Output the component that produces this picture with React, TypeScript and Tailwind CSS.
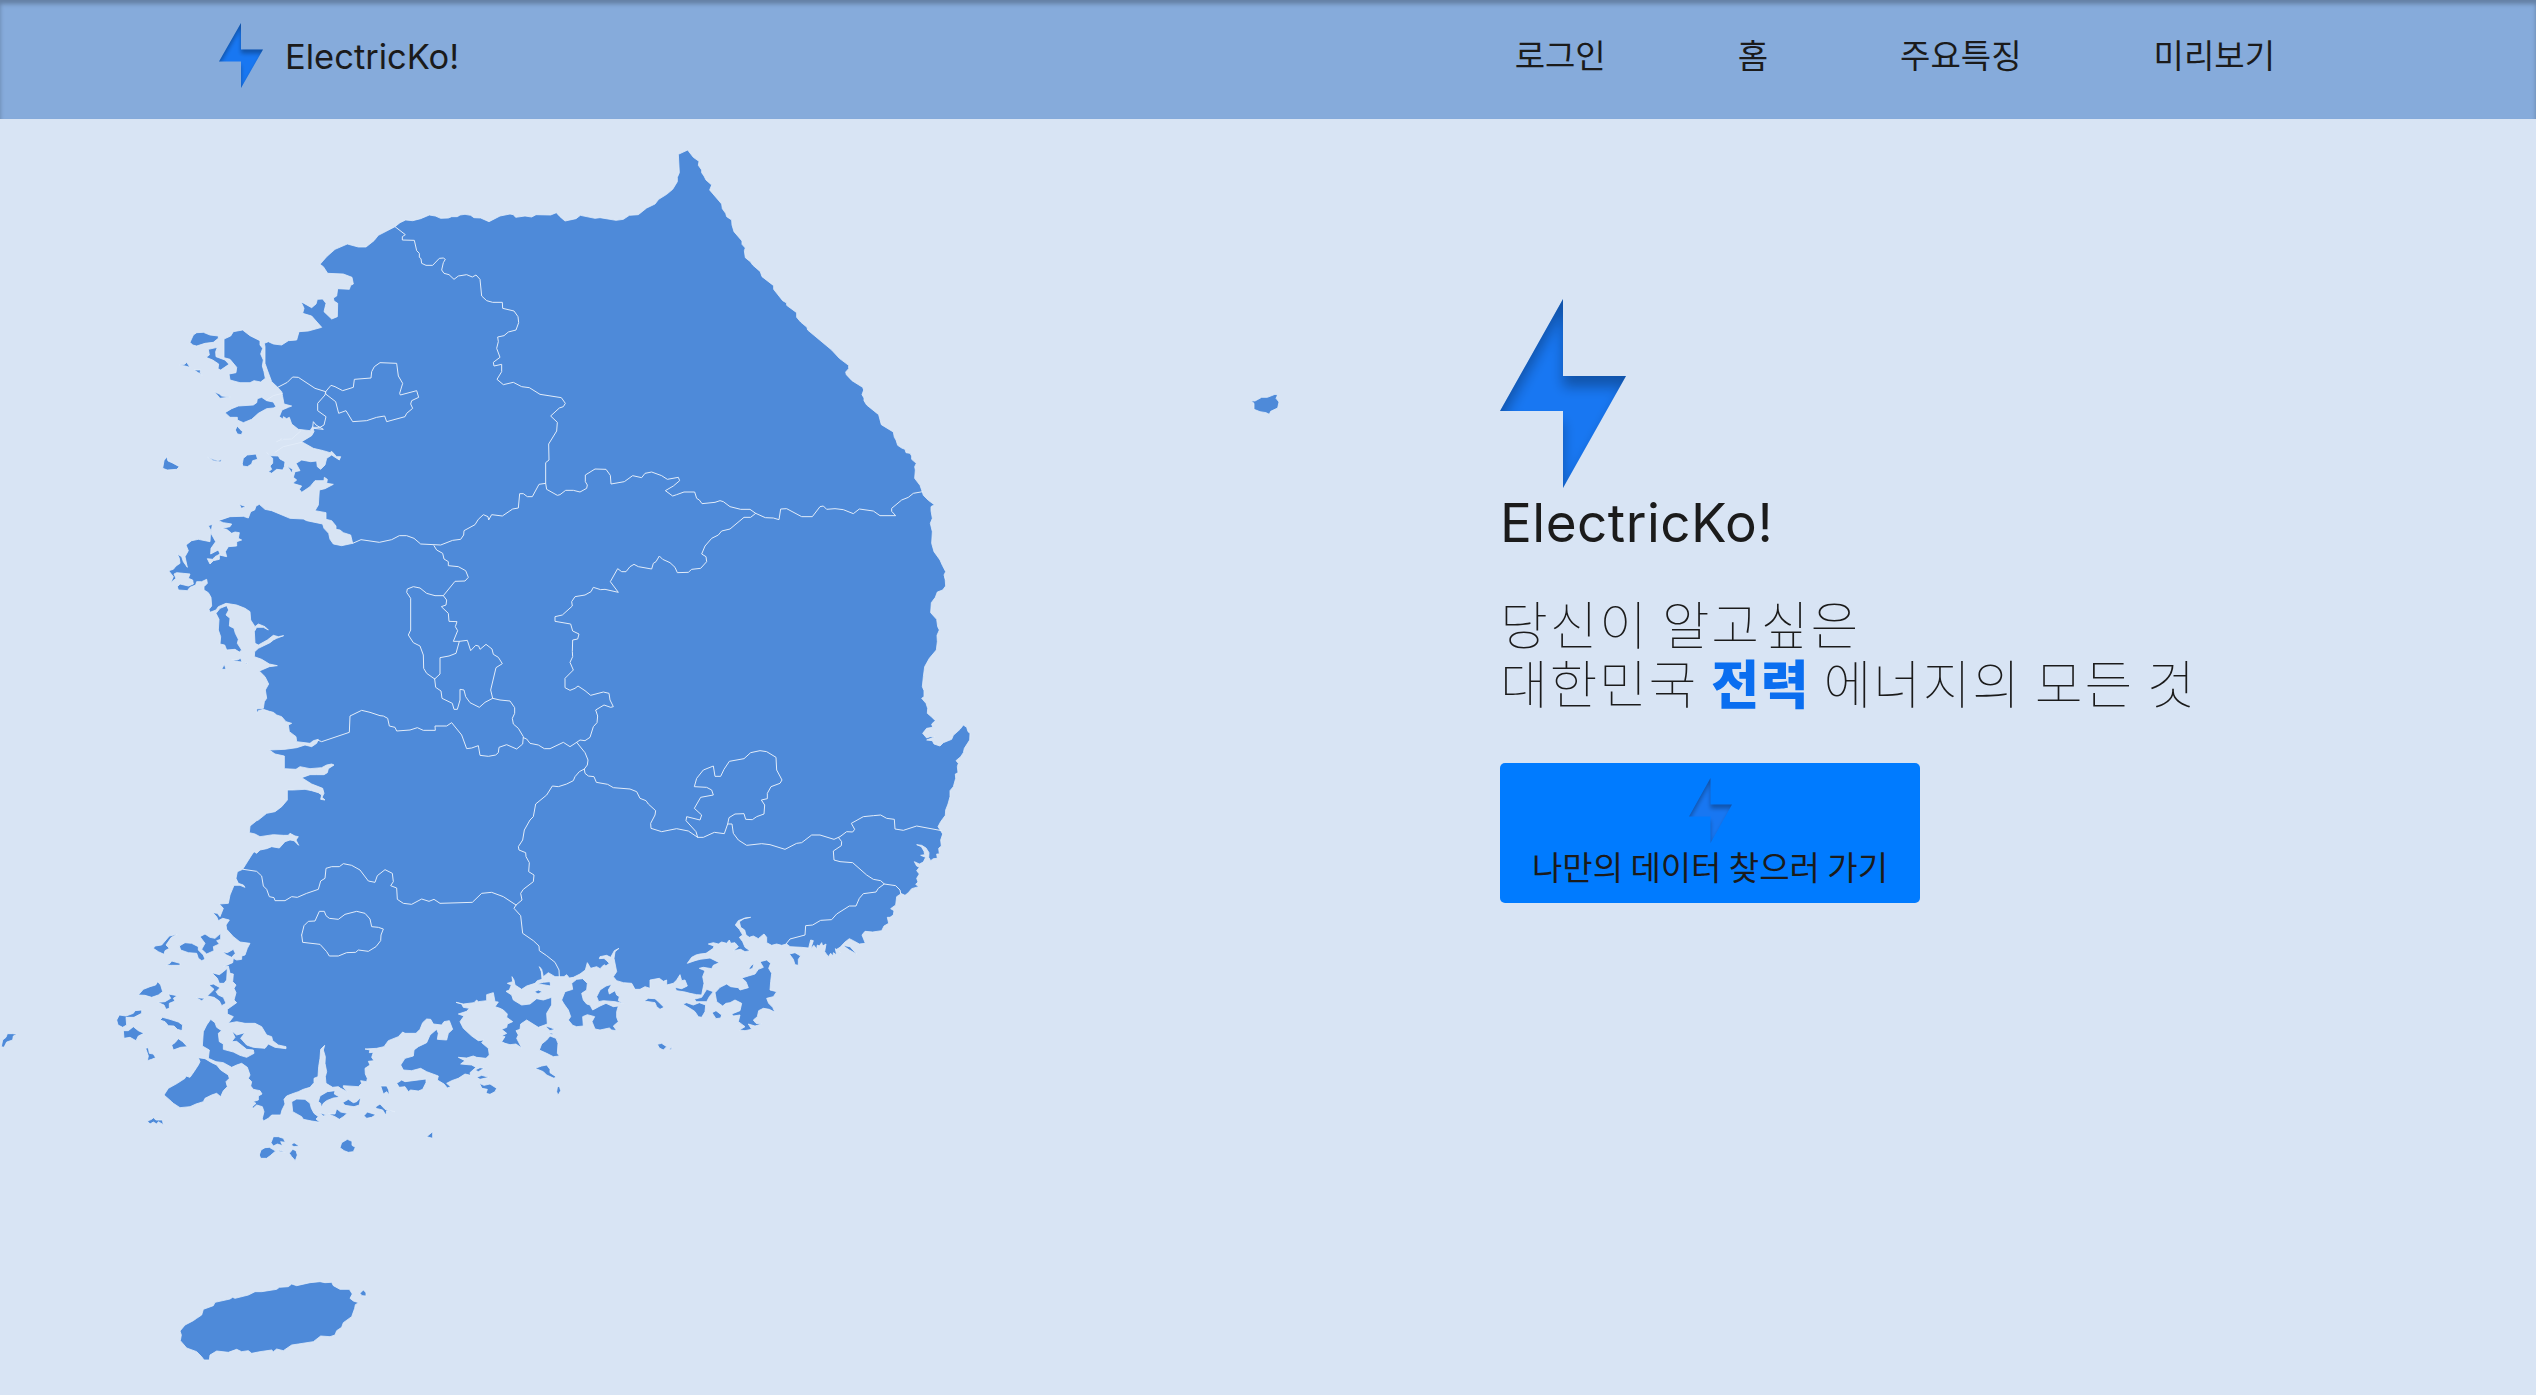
import { useId } from "react";

type Sheet = { at: [number, number]; pts: string };

// The map is drawn in survey sheets; each sheet has its own origin, in thirds of a pixel.
const NW = (pts: string): Sheet => ({ at: [450, 390], pts });
const NE = (pts: string): Sheet => ({ at: [1680, 390], pts });
const W = (pts: string): Sheet => ({ at: [390, 1440], pts });
const E = (pts: string): Sheet => ({ at: [1590, 1350], pts });
const SW = (pts: string): Sheet => ({ at: [270, 2460], pts });
const S = (pts: string): Sheet => ({ at: [1500, 2460], pts });
const J = (pts: string): Sheet => ({ at: [0, 3000], pts });
const U = (pts: string): Sheet => ({ at: [3690, 1110], pts });

const join = (...sheets: Sheet[]) =>
  sheets
    .map(({ at, pts }) =>
      pts
        .trim()
        .split(/\s+/)
        .map((p) => {
          const [x, y] = p.split(",").map(Number);
          return `${x + at[0]},${y + at[1]}`;
        })
        .join(" "),
    )
    .join(" ");

const mainland = join(
  NW("735,290 750,278 767,270 788,272 812,266 838,255 856,258 872,265 895,264 905,260 922,260 930,255 945,253 962,256 972,263 992,264 1017,275 1050,258 1080,252 1090,254 1097,262 1125,258 1145,261 1158,254 1202,255 1219,248 1230,260 1245,273"),
  NE("15,273 48,266 61,256 105,265 120,263 168,271 190,268 208,256 235,254 260,234 285,222 296,208 320,193 338,178 352,155 352,142 358,128 355,73 383,60 400,82 417,94 415,106 425,120 425,128 432,138 438,150 455,165 449,180 485,222 487,236 497,250 500,260 515,270 516,285 522,305 546,333 546,343 556,354 553,362 556,383 572,396 578,405 601,425 606,440 641,467 641,478 668,512 680,519 680,526 710,548 710,562 722,576 741,592 743,600 815,660 838,685 866,706 866,716 857,726 859,734 876,752 908,772 911,780 906,794 912,804 912,812 920,825 956,854 964,884 1000,906 1003,922 1008,930 1013,946 1025,954 1035,958 1038,968 1050,970 1055,978 1055,988 1069,1000 1064,1010 1066,1020 1064,1045 1080,1066 1087,1086 1090,1096 1105,1111 1123,1124 1113,1130 1113,1142 1117,1165 1111,1180 1117,1205 1115,1240 1122,1265 1140,1290 1147,1306 1157,1325 1152,1335 1157,1350"),
  E("1245,380 1247,408 1238,420 1222,426 1216,442 1204,458 1202,488 1220,508 1223,530 1228,540 1221,556 1222,575 1219,600 1198,625 1184,650 1180,680 1177,710 1182,722 1182,740 1175,745 1188,760 1193,775 1192,790 1204,800 1216,812 1205,822 1208,832 1190,835 1178,850 1190,864 1200,860 1215,860 1190,870 1207,872 1212,882 1230,888 1240,878 1265,868 1270,856 1290,838 1300,825 1310,832 1314,845 1320,850 1319,870 1303,895 1300,908 1292,920 1278,932 1285,940 1282,950 1284,968 1276,972 1277,985 1270,1010 1260,1022 1260,1040 1254,1062 1247,1080 1246,1096 1232,1115 1224,1130 1232,1142 1238,1152 1232,1170 1234,1188 1226,1195 1228,1212 1220,1212 1222,1225 1210,1226 1202,1232 1196,1222 1197,1208 1188,1194 1175,1186 1160,1184 1174,1190 1182,1204 1184,1214 1172,1216 1187,1222 1180,1236 1168,1242 1153,1235 1160,1248 1168,1252 1160,1262 1168,1272 1160,1285 1164,1296 1157,1303 1166,1310 1145,1316 1135,1328 1125,1336 1112,1330"),
  S("1202,222 1190,230 1187,255 1172,266 1182,272 1180,285 1170,292 1162,292 1166,310 1152,318 1145,332 1118,336 1095,334 1086,345 1096,370 1078,372 1060,362 1048,356 1035,366 1020,382 1010,388 1022,398 1006,386 1010,405 1000,398 1000,408 992,400 985,410 974,395 978,372 968,378 965,368 958,378 952,375 950,388 942,376 932,386 940,362 932,360 926,384 905,382 870,380 860,372 845,376 830,372 815,376 800,368 800,352 792,342 782,350 775,356 760,348 748,352 738,345 734,330 722,322 718,305 732,296 752,292 735,294 715,302 706,315 718,328 728,345 718,352 728,365 735,382 750,392 735,395 722,388 700,392 715,380 705,368 692,370 688,360 680,370 665,366 655,372 640,368 625,372 642,378 640,385 618,400 600,402 588,405 575,412 562,430 585,422 600,418 630,414 658,428 640,436 635,446 610,442 598,445 615,452 608,470 612,490 605,525 590,524 570,520 555,516 530,512 524,502 545,506 562,498 555,480 545,482 540,464 530,480 520,490 500,495 500,480 490,484 478,475 450,480 450,505 435,500 420,508 405,508 395,490 370,488 350,482 340,470 350,455 346,435 342,415 345,395 357,385 343,392 332,412 320,406 300,410 298,416 312,415 320,422 328,430 318,438 312,434 300,446 290,440 272,445 262,428 256,450 240,462 220,472 208,474 200,464 192,470 178,470 165,470 145,458 130,470 125,448 118,440 124,455 126,478 112,482 105,490 80,498 65,508 45,495 42,480 36,470 38,485 22,490 34,495 28,510 18,514 35,525 40,540 65,555 90,552 110,536 130,540 155,532 155,555 140,580 142,612 115,622 80,600 62,612 60,628 48,632 55,645 50,655 65,684 48,672 30,674 15,670 5,665 15,650 4,648 20,640 5,628 20,622 22,612 38,605 20,592 22,582 10,570 0,565"),
  SW("1230,565 1215,560 1225,546 1215,545 1210,518 1190,524 1190,542 1165,545 1160,540 1152,548 1120,552 1098,547 1115,552 1120,562 1138,565 1130,574 1105,582 1122,588 1110,605 1120,625 1145,648 1165,662 1182,660 1175,668 1195,685 1198,705 1188,715 1160,712 1150,708 1130,714 1105,712 1125,722 1112,732 1145,735 1158,742 1140,758 1142,766 1125,762 1105,775 1085,782 1070,790 1082,800 1072,804 1062,792 1042,780 1045,768 1010,755 992,745 965,752 940,750 932,735 945,715 970,708 972,690 985,680 1010,668 1020,645 1040,628 1045,640 1042,658 1070,660 1075,640 1088,628 1078,602 1062,605 1055,615 1030,612 1022,598 1010,597 998,608 990,628 978,640 945,640 938,636 925,650 895,662 882,680 860,685 825,687 840,690 838,698 850,697 845,712 852,722 835,724 840,735 825,745 826,762 832,775 830,785 812,782 815,790 805,800 760,797 760,802 772,815 752,805 745,800 728,802 718,796 708,790 706,770 710,755 705,730 706,710 700,690 704,676 692,688 690,715 686,740 684,770 672,775 672,788 660,802 640,808 625,815 605,822 590,828 582,838 585,852 576,870 572,885 545,885 535,895 520,903 517,895 522,875 517,860 500,855 490,864 485,862 498,850 488,845 505,840 505,828 516,822 510,812 490,808 482,798 485,785 475,775 480,765 472,742 455,730 440,735 425,742 400,728 378,725 355,715 358,690 337,678 340,635 350,615 362,598 375,608 380,622 395,632 385,640 388,665 400,672 400,688 430,696 450,706 470,712 492,700 490,690 470,688 450,672 440,664 425,665 435,652 425,632 440,645 465,638 452,655 470,675 490,682 525,685 535,672 555,682 588,686 588,680 565,675 548,662 545,650 530,645 515,620 495,610 465,610 440,605 415,610 430,590 412,582 412,568 440,548 432,540 438,518 432,505 438,495 428,485 430,462 420,460 415,438 400,440 428,428 430,415 440,420 455,418 455,408 465,405 472,385 480,370 450,366 430,350 410,328 408,315 418,300 398,295 385,302 380,290 368,278 382,280 390,290 400,265 388,252 415,250 420,225 432,196 450,196 465,202 460,195 445,190 438,175 442,155 458,148 485,105 492,95 500,100 510,90 530,86 545,80 568,84 585,65 600,60 612,62 626,76 618,60 625,50 615,48 600,40 595,46 580,46 550,44 510,50 495,42 478,38 480,18 500,2"),
  W("385,1020 410,1000 435,995 455,980 472,960 472,930 490,930 525,928 545,932 565,938 575,945 572,958 585,960 576,952 582,940 578,925 545,912 515,893 540,884 560,884 582,884 592,878 595,866 612,855 605,852 590,855 575,863 540,866 510,860 498,868 463,866 463,828 435,822 418,810 465,808 500,803 525,795 545,800 560,790 565,778 550,782 540,790 500,785 498,770 478,755 475,735 485,730 468,725 455,710 440,705 430,697 418,694 400,688 385,692 382,700 379,687 400,685 403,665 410,655 406,630 416,612 405,590 388,573 418,560 442,557 418,552 395,538 373,530 374,515 385,505 420,488 430,480 440,475 461,467 445,470 430,466 412,480 385,495 375,490 373,455 380,442 400,442 415,450 405,440 385,432 375,440 362,420 360,395 345,385 320,375 288,370 265,380 258,390 240,397 237,388 245,378 243,352 235,338 222,330 222,320 232,310 230,298 215,305 200,305 197,315 180,322 172,332 145,330 142,320 150,312 175,318 190,312 188,300 175,295 180,282 160,280 140,278 132,282 138,295 122,308 130,290 116,272 130,268 138,258 150,250 148,235 142,222 155,230 160,245 172,262 165,230 175,212 168,195 185,182 205,178 240,185 242,150 235,137 247,133 243,160 257,185 243,205 242,222 255,215 265,210 270,222 255,230 248,238 232,236 240,252 250,242 268,238 268,225 290,230 286,215 295,200 320,198 320,185 335,180 325,175 328,158 315,156 305,160 290,148 275,145 300,140 305,132 280,128 265,122 300,110 340,109 355,114 362,95 374,90 378,78 388,73 405,88 425,92 480,115 520,117 530,122 578,132 582,145 596,160 600,178 610,192 635,197 668,190 662,165 640,158 630,150 618,148 618,138 605,122 588,118 588,98 555,92"),
  NW("495,1142 505,1125 508,1080 525,1076 550,1063 530,1060 532,1048 523,1042 522,1052 495,1052 480,1070 455,1087 448,1078 455,1068 428,1060 440,1050 430,1042 435,1025 450,1022 438,1000 455,990 482,995 500,993 502,1010 512,1018 525,1005 530,985 545,975 568,990 572,980 560,980 545,964 540,968 520,962 490,955 455,935 485,917 492,905 488,890 480,902 445,898 425,882 418,862 410,866 400,860 400,868 388,860 396,840 415,832 425,828 402,822 398,800 395,785 383,772 365,755 352,720 345,700 345,650 343,640 355,635 370,642 395,645 415,632 440,630 447,605 475,603 515,592 485,558 458,550 462,535 453,515 485,533 498,522 502,508 518,507 528,520 522,545 545,567 562,560 563,520 552,513 550,504 560,498 563,476 598,478 602,466 610,462 606,442 580,432 533,430 520,410 510,403 530,380 555,358 592,342 625,351 648,351 672,332 685,316 735,290"),
);

const islands = [
  NW("120,637 130,615 140,608 160,607 180,615 205,618 205,625 190,637 165,640 140,648 128,645"),
  NW("222,627 242,618 250,605 278,600 300,617 330,632 330,645 338,655 332,672 340,690 337,708 342,725 346,745 332,756 312,752 300,758 270,758 240,750 237,732 258,728 260,712 240,688 222,683"),
  NW("175,658 202,652 197,665 198,680 225,690 237,703 212,720 204,716 206,702 188,690 168,682 178,675"),
  NW("88,705 104,703 110,697 120,712 105,708"),
  NW("132,720 152,720 150,728 157,736"),
  NW("193,785 208,792 215,798 241,801 210,805"),
  NW("225,848 245,836 265,828 310,825 320,818 322,806 335,802 350,812 370,816 378,830 370,834 350,836 325,850 305,868 280,878 262,870 262,862 240,862"),
  NW("262,888 270,898 278,905 274,914 262,912 256,900"),
  NW("38,1015 42,992 50,980 54,993 66,998 88,1010 80,1018 52,1020"),
  NW("173,982 190,988 205,992 215,988 212,996 190,992"),
  NW("277,1000 280,985 292,975 318,972 323,988 308,992 305,1002 292,1010 278,1008"),
  NW("350,968 362,977 385,978 390,987 405,995 403,1010 398,1020 380,1018 365,1030 355,1025 365,1018 360,1008 368,1000 368,985"),
  NW("412,1008 428,1018 426,1030"),
  NW("268,1123 288,1130 274,1135"),
  NW("390,928 402,926 398,930"),
  W("258,400 270,385 290,377 296,390 288,405 300,415 298,438 312,445 316,460 325,478 322,490 335,510 328,516 315,508 290,510 284,495 270,492 272,470 265,450 267,418"),
  W("305,540 322,540 332,535 336,546 318,544"),
  W("275,568 283,553 288,568"),
  W("346,549 354,550 350,552"),
  SW("190,385 195,378 215,375 238,348 262,343 244,352 228,375 238,385 225,392 222,403 205,395"),
  SW("268,378 285,368 305,370 325,380 325,390 340,405 345,418 335,422 325,415 320,400 295,398 272,390"),
  SW("330,350 345,342 360,352 375,355 392,340 392,358 380,362 388,372 370,380 372,392 350,402 335,388 345,370"),
  SW("398,395 412,398 430,388 436,400 425,412 410,405"),
  SW("228,436 240,430 245,423 270,430 270,436 245,436"),
  SW("365,458 388,464 400,455 412,445 410,480 402,490 388,490 382,475"),
  SW("357,495 370,492 390,503 378,515 385,525 400,532 408,550 395,557 388,543 372,532 352,528 365,515 372,508"),
  SW("318,533 345,535 335,542"),
  SW("145,525 160,508 180,500 197,495 203,485 212,495 218,515 205,525 185,532 165,526"),
  SW("203,547 225,545 242,535 235,522 262,527 250,535 255,543 238,550 238,565 228,568 222,555"),
  SW("80,600 88,585 108,588 130,580 135,572 155,570 155,580 132,592 108,592 110,615 98,622 84,615"),
  SW("100,632 115,632 130,620 145,632 162,640 145,648 138,662 120,652 102,655"),
  SW("210,600 218,592 240,598 265,606 278,615 276,632 262,628 252,618 235,617 225,605"),
  SW("245,675 255,668 265,656 278,665 292,680 272,682 250,690"),
  SW("167,685 175,683 178,700 190,702 197,713 185,718 172,722 175,708"),
  SW("222,825 235,805 262,790 285,775 288,768 300,772 312,755 325,735 330,725 325,713 345,716 365,728 380,735 392,750 415,765 418,775 408,785 412,800 400,812 392,830 380,820 365,825 345,835 340,845 318,852 300,860 270,863 250,850 245,845"),
  SW("172,903 185,898 190,893 198,900 217,900 220,914 205,905 200,912 190,906 180,912"),
  SW("605,845 620,837 645,838 660,850 664,865 672,880 685,890 678,897 690,907 665,903 640,898 635,890 608,875"),
  SW("685,845 690,828 712,815 735,812 733,822 750,832 730,834 710,842 700,850 694,862 692,850"),
  SW("758,848 775,838 790,848 800,845 812,832 808,855 792,860 765,856"),
  SW("688,878 710,885 700,888"),
  SW("715,882 735,882 740,866 752,876 772,880 760,890 748,898 735,890"),
  SW("822,887 832,876 858,884 845,892 830,895"),
  SW("855,862 870,852 885,868 898,872 915,875 890,872 888,886 878,870 862,866"),
  SW("872,798 890,798 896,810 898,825 890,815 880,822"),
  SW("920,790 935,780 945,785 1008,777 1008,788 998,808 985,813 962,810 955,815 945,800 928,802"),
  SW("1155,750 1170,743 1182,745 1165,755"),
  SW("1160,772 1175,766 1197,772 1170,778"),
  SW("1168,790 1182,796 1200,792 1220,805 1215,815 1200,823 1188,820 1192,808 1176,805"),
  SW("543,968 550,950 565,950 580,955 586,967 572,965 578,977 562,972 550,978"),
  SW("508,1005 513,990 525,983 538,982 557,993 542,1006 530,1015 512,1015"),
  SW("603,975 612,968 628,978 612,980"),
  SW("598,1000 608,988 618,992 622,1005 616,1022 605,1010"),
  SW("562,990 574,992 586,996 570,995"),
  SW("750,983 755,968 772,958 786,964 786,976 796,982 790,995 775,997 762,992"),
  SW("1010,950 1028,935 1028,955"),
  S("118,690 125,672 140,660 150,648 168,655 174,670 172,700 178,708 160,710 140,700"),
  S("105,745 125,738 140,735 150,748 150,758 168,770 162,775 140,765 130,755"),
  S("172,802 178,798 182,812 174,826 170,815"),
  S("135,618 150,622 165,628 150,632"),
  S("145,638 158,640 158,646"),
  S("110,492 130,487 150,485 152,498 130,494"),
  S("103,515 115,510 127,515 114,522"),
  S("215,490 230,478 248,476 262,490 260,510 245,520 250,540 260,552 270,555 278,570 300,558 318,550 340,560 355,558 350,575 350,592 355,605 340,618 350,632 335,630 328,624 300,630 285,627 276,605 284,590 262,584 248,590 250,618 230,620 218,616 205,600 212,590 205,570 192,552 185,540 195,515 218,508"),
  S("290,530 300,510 318,498 335,493 325,510 328,522 345,512 350,525 358,530 355,542 370,550 345,545 310,542 296,545"),
  S("432,543 445,535 465,536 475,545 492,562 480,568 470,560 465,548"),
  S("548,552 560,548 580,555 598,548 617,555 615,575 605,592 595,590 585,575 578,570"),
  S("582,538 605,532 620,508 640,515 628,530 620,545 590,545"),
  S("636,578 648,572 665,585 662,594 648,596"),
  S("645,518 660,502 680,492 692,500 715,503 720,510 745,503 738,485 725,474 745,468 765,462 775,448 790,442 780,425 800,420 812,430 806,445 815,460 812,485 810,510 830,515 820,530 800,535 806,550 818,562 825,577 808,568 790,565 776,572 772,590 760,600 768,610 785,612 765,618 745,612 755,628 735,632 718,630 735,620 715,605 720,585 700,588 695,582 720,572 725,550 705,540 690,548 678,550 668,558 650,545"),
  S("745,450 752,438 762,430 758,445"),
  S("868,402 885,398 902,408 895,418 895,436 885,434 880,418"),
  S("1028,376 1050,380 1070,402 1048,390"),
  S("472,673 485,670 500,680 490,690 478,684"),
  S("508,688 516,680 514,690"),
  J("540,993 555,975 580,962 590,955 605,945 610,928 640,917 645,907 690,897 698,892 705,895 745,885 765,875 785,875 830,868 838,862 865,860 875,852 890,857 930,848 960,845 975,848 995,847 1000,857 1020,868 1048,868 1057,882 1050,895 1060,903 1076,908 1066,914 1064,925 1055,950 1030,968 1025,982 1010,992 1005,1005 990,1010 962,1008 940,1025 895,1032 875,1035 850,1052 830,1047 820,1055 815,1050 780,1055 755,1060 745,1052 725,1055 710,1048 685,1057 650,1053 630,1065 628,1080 612,1080 605,1070 590,1055 560,1044 541,1022 544,1005"),
  J("1080,880 1090,870 1098,878 1098,888 1086,887"),
  J("4,140 8,120 18,112 22,101 38,101 52,103 40,108 38,120 20,126 12,142"),
  U("63,92 75,93 95,82 112,82 135,73 143,75 138,85 147,96 143,114 122,124 118,133 108,128 90,125 72,118 72,100"),
].map((s) => join(s));

const borders = [
  join(
    NW("735,290 766,314 757,320 757,330 793,331 800,362 808,370 808,382 813,386 815,400 828,406 848,406 868,385 880,384 886,388 880,398 875,420 882,430 897,434 912,448 925,438 950,434 967,441 978,435 990,448 995,498 1010,512 1028,517 1057,517 1058,535 1092,543 1104,560 1106,578 1098,600 1075,606 1062,617 1043,621 1045,635 1040,655 1050,682 1030,697 1032,708 1055,703 1055,725 1041,748 1060,764 1090,757 1115,770 1138,773 1170,793 1234,803 1246,820 1240,830 1228,834 1202,858 1222,877 1220,903 1196,942 1197,990 1187,998 1187,1060"),
    E("50,118 82,136 90,134 107,121 130,121 150,126 170,115 172,105 166,95 166,75 195,57 228,58 241,76 243,102 283,95 308,77 335,83 345,70 365,66 395,77 412,88 445,82 449,92 430,108 406,122 428,138 440,134 462,126 494,126 500,145 508,150 516,161 555,157 570,152 580,155 600,170 632,178 660,178 677,190 706,203 730,204 747,209 752,177 770,176 815,200 847,200 870,170 880,168 890,178 915,176 940,179 970,191 988,177 1030,183 1050,197 1097,197 1085,184 1085,175 1115,150 1135,142 1150,130 1178,125"),
  ),
  join(NW("527,785 543,766 555,770 578,782 610,772 613,748 663,744 665,725 673,710 690,698 740,700 745,738 758,760 749,790 751,795 800,782 806,802 785,812 782,822 788,835 770,850 765,860 710,875 704,858 680,862 650,872 608,875 588,842 566,850 557,815 527,792 527,785")),
  join(NW("383,772 412,757 428,741 445,742 495,775 527,785 525,795 503,820 503,842 528,860 522,885 510,892 488,892 490,875 498,885 520,898 490,895")),
  join(NW("350,810 370,797 397,790")),
  join(NW("380,935 395,928 425,927 452,903")),
  join(NW("375,967 400,950 455,937")),
  join(W("668,190 693,179 748,187 785,179 808,167 830,167 852,175 872,192 932,195 968,181 992,178 1001,165 1002,152 1035,134 1045,118 1060,104 1074,110 1076,120 1085,104 1117,108 1148,87 1165,84 1169,41 1180,41 1192,50 1207,50 1227,13 1247,10")),
  join(W("912,197 920,210 938,220 942,237 955,245 955,257 985,260 1007,272 1015,292 1005,303 975,304 940,347 950,360 948,375 934,380 955,400 957,424 981,425 976,440 983,452 970,484 988,484 978,520 957,528 930,533 930,582 914,597")),
  join(W("940,347 915,347 890,340 870,324 850,320 832,327 830,337 842,355 842,450 835,465 850,488 870,498 880,525 881,565 890,580 914,597")),
  join(W("988,484 1012,481 1022,512 1037,496 1046,498 1050,508 1068,493 1086,507 1090,523 1105,532 1117,551 1098,563 1082,630 1088,655")),
  join(W("914,597 917,622 933,633 936,655 967,670 972,688 982,688 990,660 990,628 1002,630 1007,650 1020,668 1048,682 1065,667 1088,655 1110,660 1140,663 1154,683 1154,700 1147,715 1150,732 1165,745 1180,770 1178,792 1160,807 1130,794 1107,802 1105,818 1097,825 1075,829 1050,826 1045,797 1025,804 1010,806 995,765 965,728 950,738 915,738 916,751 880,751 862,743 840,750 800,753 795,742 778,738 773,715 760,708 750,707 720,697 695,691 660,708 658,757 575,785 562,780")),
  join(W("1180,773 1190,777 1200,790 1225,795 1243,806 1260,806 1300,787 1320,800 1340,787")),
  join(E("677,190 662,202 642,202 600,237 575,243 565,255 545,265 525,288 515,312 528,320 530,335 512,355 485,358 475,367 442,368 435,352 420,338 398,328 388,318 378,335 370,340 365,357 325,350 312,343 300,350 288,365 275,365 263,356 241,395 265,427 225,418 212,419 190,412 183,425 165,435 135,440 125,455 127,468 97,495 75,500 75,514 122,522 128,543 147,552 143,567 128,570 127,605 128,620 120,637 130,660 105,685 105,713 120,721 135,715 144,708 165,722 182,736 220,726 237,730 240,750 250,770 242,772 222,765 197,780 203,798 201,818 190,830 180,862 165,872 150,870 140,877")),
  join(E("140,877 165,908 174,930 172,945 163,957 165,970 175,978 192,980 199,997 233,1003 250,1013 300,1017 320,1025 330,1045 348,1052 355,1062 377,1082 375,1095 362,1120 363,1135 395,1145 440,1136 475,1143 503,1162 520,1162 553,1147 583,1151 593,1122 606,1122 610,1150 625,1170 650,1186 695,1181 720,1184 765,1198 800,1180 815,1178 845,1155 870,1155 912,1168 930,1160 950,1145 968,1146 974,1138 964,1120 1000,1100 1030,1097 1052,1095 1070,1105 1093,1108 1095,1137 1120,1141 1160,1128 1235,1142")),
  join(E("503,1162 498,1145 468,1112 470,1100 510,1110 515,1095 493,1075 512,1042 550,1035 545,1020 530,1012 493,1010 500,985 520,960 550,948 555,979 572,979 582,958 598,934 642,926 662,908 690,902 710,905 738,922 740,960 756,990 750,1000 723,1010 712,1030 712,1046 694,1050 704,1065 702,1092 680,1100 667,1109 647,1108 642,1091 615,1092 597,1103 593,1122")),
  join(E("925,1162 935,1175 934,1187 910,1203 912,1230 930,1235 968,1238 1010,1275 1030,1288 1052,1292 1063,1302 1097,1307 1110,1320 1112,1330")),
  join(S("1153,192 1135,205 1128,216 1090,221 1078,235 1068,258 1048,258 1010,282 995,299 962,301 938,315 917,317 915,345 870,357 858,372")),
  join(E("163,957 148,965 135,980 130,992 110,1002 85,1010 67,1008 50,1035 17,1062 10,1100 0,1110"), W("1183,1050 1178,1080 1165,1100 1167,1110 1187,1118 1188,1130 1198,1148 1196,1175 1212,1185 1210,1205 1180,1228 1172,1240 1176,1260 1158,1275 1152,1285"), S("62,287 68,340 100,362 117,378 118,392 140,407 165,427 177,450 178,472")),
  join(W("340,1168 380,1174 395,1188 400,1218 410,1228 418,1250 432,1253 435,1262 465,1262 485,1250 502,1252 530,1240 565,1228 572,1203 585,1195 588,1165 605,1160 628,1160 640,1151 665,1156 690,1170 715,1203 735,1207 742,1187 765,1169 787,1180 790,1205 782,1217 800,1224 802,1258 820,1270 845,1273 875,1257 897,1264 912,1258 930,1270 1027,1267 1055,1240 1085,1237 1120,1250 1158,1275")),
  join(SW("635,345 642,317 655,304 675,303 688,274 703,274 708,287 718,295 745,298 765,283 800,274 825,280 840,297 845,320 865,322 880,327 873,345 872,362 858,380 835,394 805,390 797,397 770,398 745,408 718,408 710,395 690,373 638,367 635,345")),
];

function Bolt({ className }: { className: string }) {
  const id = useId();
  return (
    <svg className={className} viewBox="0 0 126 189" preserveAspectRatio="none" aria-hidden="true">
      <defs>
        <filter id={id} x="-0.4" y="-0.4" width="1.8" height="1.8" colorInterpolationFilters="sRGB">
          <feComponentTransfer in="SourceAlpha" result="outside">
            <feFuncA type="linear" slope="-1" intercept="1" />
          </feComponentTransfer>
          <feOffset in="outside" dx="0" dy="11" result="moved" />
          <feGaussianBlur in="moved" stdDeviation="6.5" result="soft" />
          <feComposite in="soft" in2="SourceAlpha" operator="in" result="inner" />
          <feComponentTransfer in="inner" result="shadow">
            <feFuncA type="linear" slope="0.3" />
          </feComponentTransfer>
          <feMerge>
            <feMergeNode in="SourceGraphic" />
            <feMergeNode in="shadow" />
          </feMerge>
        </filter>
      </defs>
      <path d="M63 0V77H126L63 189V112H0Z" fill="#1877f2" filter={`url(#${id})`} />
    </svg>
  );
}

function KoreaMap() {
  return (
    <svg className="block h-[1276px] w-[1320px] shrink-0" viewBox="0 357 3960 3828" role="img" aria-label="대한민국 지도">
      <g fill="#4e8ad9" stroke="#e2ecf9" strokeWidth="2.4" strokeLinejoin="round">
        <polygon points={mainland} />
        {islands.map((p, i) => (
          <polygon key={i} points={p} />
        ))}
      </g>
      <g fill="none" stroke="#e2ecf9" strokeWidth="3" strokeLinejoin="round" strokeLinecap="round">
        {borders.map((p, i) => (
          <polyline key={i} points={p} />
        ))}
      </g>
    </svg>
  );
}

const menu = ["로그인", "홈", "주요특징", "미리보기"];

export default function App() {
  return (
    <div className="h-[1395px] w-full overflow-hidden bg-[#d8e4f4] font-['Noto_Sans_CJK_KR',sans-serif] text-[#1b1b1b]">
      <header className="flex h-[119px] items-start justify-between bg-[#86abdb] pr-[261px] pl-[219px] shadow-[inset_0_4px_4px_rgba(0,0,0,0.25)]">
        <a className="flex items-center pt-[22px]">
          <Bolt className="h-[65px] w-[44px]" />
          <span className="ml-[22px] pt-[2px] font-['Inter',sans-serif] text-[34.5px] leading-[65px]">ElectricKo!</span>
        </a>
        <nav className="flex gap-[132px] pt-[30px] text-[33px] leading-[48px]">
          {menu.map((m) => (
            <a key={m}>{m}</a>
          ))}
        </nav>
      </header>
      <main className="flex">
        <KoreaMap />
        <section className="ml-[180px] pt-[180px]">
          <Bolt className="h-[189px] w-[126px]" />
          <h1 className="font-['Inter',sans-serif] text-[53px] leading-[70px] tracking-[0.5px]">ElectricKo!</h1>
          <div className="mt-[35px] text-[52px] leading-[59px] font-thin tracking-[1.7px] whitespace-nowrap">
            <p>당신이 알고싶은</p>
            <p>
              대한민국 <b className="font-black text-[#0a6ef0]">전력</b> 에너지의 모든 것
            </p>
          </div>
          <button className="mt-[52px] flex h-[140px] w-[420px] flex-col items-center rounded-[5px] bg-[#007bff] pt-[15px]">
            <Bolt className="h-[65px] w-[43px]" />
            <span className="text-[33px] leading-[46px]">나만의 데이터 찾으러 가기</span>
          </button>
        </section>
      </main>
    </div>
  );
}
